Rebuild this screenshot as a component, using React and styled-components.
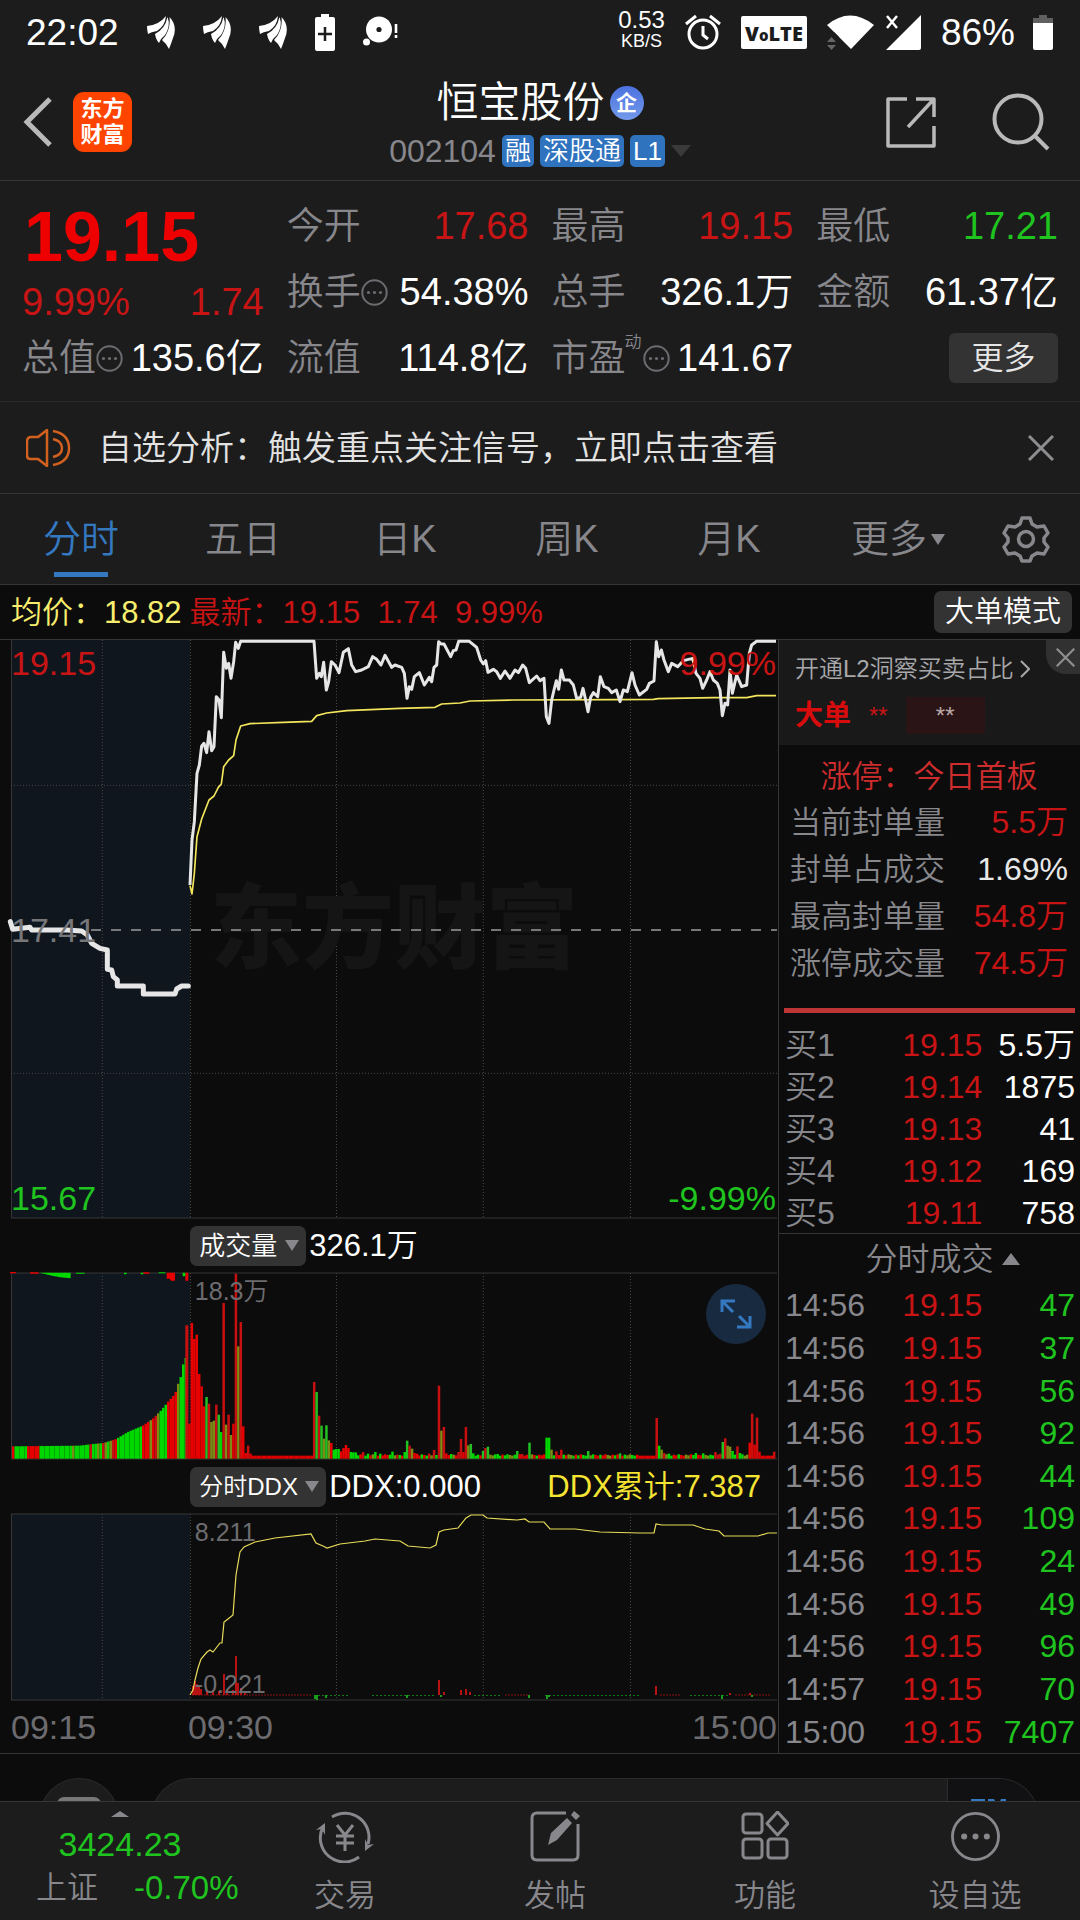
import React from 'react';
import styled, { createGlobalStyle } from 'styled-components';

const c = {
  panel: '#1c1c1d',
  chart: '#0c0c0c',
  pre: '#10161e',
  line: '#363637',
  label: '#87878c',
  dim: '#6c6c70',
  red: '#c81414',
  hotRed: '#ee0000',
  green: '#1fc41f',
  blue: '#3478c0',
  icon: '#b9b9b9',
  chip: '#333334',
};

const Global = createGlobalStyle`
  * { box-sizing: border-box; }
  body { margin: 0; background: ${c.chart}; }
  button, select, input {
    font: inherit; color: inherit; border: 0; padding: 0; margin: 0;
    background: none; appearance: none; border-radius: 0;
  }
  svg { display: block; }
`;

const Page = styled.div`
  display: flex;
  flex-direction: column;
  min-height: 100vh;
  background: ${c.chart};
  color: #fff;
  font-family: "Liberation Sans", "Noto Sans CJK SC", sans-serif;
  font-weight: 350;
  font-size: 31px;
  line-height: 1;
  white-space: nowrap;
`;

/* ---------- status bar ---------- */
const StatusBar = styled.div`
  display: flex;
  justify-content: space-between;
  align-items: center;
  height: 64px;
  padding: 0 27px 0 26px;
  background: ${c.panel};
  font-size: 37px;
`;
const StatusGroup = styled.div`
  display: flex;
  align-items: center;
  gap: ${p => p.$gap}px;
`;
const NetSpeed = styled.span`
  display: flex;
  flex-direction: column;
  align-items: center;
  padding-bottom: 6px;
  font-size: 24px;
  line-height: 24px;
  small { font-size: 18px; line-height: 18px; }
`;
const Volte = styled.span`
  display: flex;
  align-items: baseline;
  justify-content: center;
  width: 66px;
  height: 33px;
  border-radius: 2px;
  background: #fff;
  color: ${c.panel};
  font: 800 20px/35px "Open Sans", sans-serif;
  small { font-size: 15px; }
`;

/* ---------- header ---------- */
const Header = styled.header`
  display: grid;
  grid-template-columns: 1fr auto 1fr;
  align-items: center;
  height: 117px;
  padding: 0 22px;
  background: ${c.panel};
  border-bottom: 1px solid ${c.line};
`;
const HeaderSide = styled.div`
  display: flex;
  align-items: center;
  gap: ${p => p.$gap}px;
  justify-content: ${p => (p.$end ? 'flex-end' : 'flex-start')};
  padding-right: 8px;
`;
const Logo = styled.a`
  display: grid;
  place-content: center;
  width: 59px;
  height: 60px;
  border-radius: 11px;
  background: #ff4400;
  color: #fff;
  font-size: 22px;
  font-weight: 700;
  line-height: 26px;
  text-decoration: none;
`;
const TitleBlock = styled.div`
  display: flex;
  flex-direction: column;
  align-items: center;
  gap: 7px;
`;
const Title = styled.h1`
  display: flex;
  align-items: center;
  gap: 5px;
  margin: 0;
  font-size: 42px;
  font-weight: 350;
  line-height: 50px;
`;
const Seal = styled.span`
  display: grid;
  place-content: center;
  width: 34px;
  height: 34px;
  border-radius: 50%;
  background: linear-gradient(#4c72e0, #7299ea);
  font-size: 21px;
  line-height: 21px;
  font-weight: 700;
`;
const CodeRow = styled.div`
  display: flex;
  align-items: center;
  gap: 6px;
  color: ${c.label};
  font-size: 32px;
  line-height: 32px;
`;
const Tag = styled.span`
  padding: 0 3px;
  border-radius: 5px;
  background: #2f72be;
  color: #fff;
  font-size: 26px;
  line-height: 32px;
`;
const Caret = styled.i`
  width: 0;
  height: 0;
  border-left: ${p => p.$w}px solid transparent;
  border-right: ${p => p.$w}px solid transparent;
  ${p => (p.$up ? 'border-bottom' : 'border-top')}: ${p => p.$h}px solid ${p => p.$color || c.label};
`;

/* ---------- quote ---------- */
const Quote = styled.section`
  display: grid;
  grid-template-columns: repeat(4, 1fr);
  grid-template-rows: repeat(3, 66px);
  column-gap: 23px;
  padding: 12px 22px 10px;
  background: ${c.panel};
  border-bottom: 1px solid #2a2a2b;
  font-size: 38px;
`;
const Headline = styled.div`
  grid-row: span 2;
  display: flex;
  flex-direction: column;
  justify-content: space-between;
  padding: 8px 0 4px;
  color: ${c.red};
`;
const BigPrice = styled.strong`
  padding-left: 2px;
  color: ${c.hotRed};
  font-size: 70px;
  line-height: 72px;
  font-weight: 700;
`;
const Cell = styled.div`
  display: flex;
  align-items: center;
  justify-content: space-between;
  color: ${p => p.$color || '#fff'};
`;
const CellLabel = styled.span`
  display: flex;
  align-items: center;
  color: ${c.label};
  font-size: 37px;
  sup { align-self: flex-start; font-size: 17px; line-height: 17px; margin: -6px 1px 0 -1px; }
`;
const MoreButton = styled.button`
  justify-self: end;
  align-self: center;
  width: 109px;
  height: 50px;
  border-radius: 6px;
  background: ${c.chip};
  color: #e6e6e6;
  font-size: 32px;
  line-height: 48px;
`;

/* ---------- notice ---------- */
const Notice = styled.section`
  display: flex;
  align-items: center;
  height: 92px;
  padding: 0 26px;
  gap: 26px;
  background: ${c.panel};
  border-bottom: 1px solid ${c.line};
  color: #e3e3e3;
  font-size: 34px;
  p { flex: 1; margin: 0; }
`;

/* ---------- tabs ---------- */
const Tabs = styled.nav`
  display: grid;
  grid-template-columns: repeat(6, 3fr) 2fr;
  height: 91px;
  background: ${c.panel};
  border-bottom: 1px solid ${c.line};
  font-size: 38px;
`;
const Tab = styled.button`
  display: flex;
  align-items: center;
  justify-content: center;
  gap: 4px;
  padding-left: ${p => (p.$menu ? 14 : 0)}px;
  color: ${p => (p.$active ? c.blue : c.label)};
  background: ${p =>
    p.$active ? `linear-gradient(${c.blue}, ${c.blue}) center bottom 7px / 54px 5px no-repeat` : 'none'};
`;

const InfoRow = styled.div`
  display: flex;
  align-items: center;
  height: 55px;
  padding: 0 8px 0 11px;
  border-bottom: 1px solid ${c.line};
  color: ${c.red};
  white-space: pre;
`;
const Average = styled.span`
  margin-right: 8px;
  color: #f8ee6e;
`;
const ModeButton = styled.button`
  margin-left: auto;
  padding: 0 11px;
  height: 42px;
  border-radius: 7px;
  background: ${c.chip};
  color: #fff;
  font-size: 29px;
  line-height: 40px;
`;

/* ---------- body ---------- */
const Body = styled.main`
  display: grid;
  grid-template-columns: minmax(0, 778fr) minmax(0, 302fr);
  border-bottom: 1px solid ${c.line};
`;
const ChartColumn = styled.div`
  padding: 0 1px 0 11px;
`;
const Plot = styled.div`
  position: relative;
  height: ${p => p.$h}px;
  svg { width: 100%; height: 100%; overflow: visible; }
`;
const AxisLabel = styled.span`
  position: absolute;
  ${p => p.$pos};
  color: ${p => p.$color || c.dim};
  font-size: ${p => (p.$small ? 25 : 34)}px;
`;
const Watermark = styled.span`
  position: absolute;
  top: 50%;
  left: 50%;
  transform: translate(-50%, -50%);
  color: #151515;
  font-size: 92px;
  font-weight: 900;
`;
const IndicatorRow = styled.div`
  display: flex;
  align-items: center;
  gap: 3px;
  height: 55px;
  padding: 0 16px 0 23.4%;
  font-size: 31px;
`;
const Picker = styled.label`
  position: relative;
  display: flex;
  align-items: center;
  border-radius: 7px;
  background: ${c.chip};
  select {
    height: 40px;
    padding: 0 28px 0 9px;
    font-size: ${p => (p.$small ? 24 : 26)}px;
    line-height: 38px;
  }
  i { position: absolute; right: 7px; pointer-events: none; }
`;
const Cumulative = styled.span`
  margin-left: auto;
  color: #f5e532;
`;
const Expand = styled.button`
  position: absolute;
  top: 11px;
  right: 11px;
  display: grid;
  place-content: center;
  width: 60px;
  height: 60px;
  border-radius: 50%;
  background: #182a40;
  svg { width: 34px; height: 34px; }
`;
const TimeAxis = styled.div`
  display: grid;
  grid-template-columns: 23.1% 1fr auto;
  align-items: center;
  height: 52px;
  color: ${c.dim};
  font-size: 34px;
`;

/* ---------- side panel ---------- */
const Side = styled.aside`
  display: flex;
  flex-direction: column;
  border-left: 1px solid ${c.line};
`;
const Promo = styled.section`
  position: relative;
  height: 105px;
  padding: 14px 0 0 16px;
  background: #19191a;
  color: #a8a8ab;
  font-size: 24px;
`;
const PromoLink = styled.a`
  display: flex;
  align-items: center;
  gap: 6px;
  color: inherit;
  line-height: 30px;
  text-decoration: none;
`;
const PromoClose = styled.button`
  position: absolute;
  top: 0;
  right: 0;
  display: grid;
  place-content: center;
  width: 34px;
  height: 34px;
  padding-left: 4px;
  border-bottom-left-radius: 20px;
  background: #313132;
`;
const BigOrders = styled.div`
  display: flex;
  align-items: center;
  gap: 18px;
  margin-top: 13px;
  height: 37px;
  color: ${c.red};
  b { color: #d80c0c; font-size: 28px; font-weight: 700; }
  mark {
    width: 79px;
    background: #2b1415;
    color: #b8a8a8;
    text-align: center;
    line-height: 37px;
  }
`;
const Limit = styled.section`
  margin: 0 5px;
  padding: 9px 7px 21px 6px;
  border-bottom: 5px solid #bd3535;
  h2 {
    margin: 0;
    color: #cf2d2d;
    font-size: 31px;
    font-weight: 350;
    line-height: 45px;
    text-align: center;
  }
  dl { margin: 0; }
`;
const LimitRow = styled.div`
  display: flex;
  justify-content: space-between;
  line-height: 47px;
  dt { color: ${c.label}; }
  dd { margin: 0; color: ${p => p.$color || c.red}; font-size: 32px; }
`;
const Deals = styled.table`
  width: 100%;
  border-collapse: collapse;
  table-layout: fixed;
  color: ${c.label};
  font-size: 32px;
  td { padding: 0; height: ${p => p.$row}px; }
  td:first-child { padding-left: 6px; width: 36%; }
  td:nth-child(2) { color: ${c.red}; text-align: right; width: 95px; }
  td:last-child { color: ${p => p.$qty}; text-align: right; padding-right: 5px; }
`;
const BidWrap = styled.div`
  padding: 11px 0 0;
  height: 221px;
  border-bottom: 1px solid ${c.line};
`;
const DealsTitle = styled.button`
  display: flex;
  justify-content: center;
  align-items: center;
  gap: 8px;
  height: 50px;
  padding-left: 26px;
  color: ${c.label};
  font-size: 32px;
`;
const DealsWrap = styled.div`
  flex: 1;
  table { height: 100%; }
`;

/* ---------- clipped search strip ---------- */
const Strip = styled.div`
  display: flex;
  gap: 32px;
  height: 47px;
  padding: 24px 41px 0 39px;
  overflow: hidden;
`;
const RoundButton = styled.button`
  display: flex;
  justify-content: center;
  flex: none;
  width: 80px;
  height: 80px;
  padding-top: 18px;
  border: 1px solid #2c2c2d;
  border-radius: 50%;
  background: ${c.panel};
`;
const SearchPill = styled.div`
  display: flex;
  flex: 1;
  height: 80px;
  border: 1px solid #2c2c2d;
  border-radius: 40px;
  background: ${c.panel};
  overflow: hidden;
  input { flex: 1; }
  button {
    display: flex;
    justify-content: center;
    width: 91px;
    padding: 19px 24px 0 16px;
    border-left: 1px solid #2c2c2d;
    background: #111113;
  }
`;

/* ---------- bottom navigation ---------- */
const Bottom = styled.nav`
  display: grid;
  grid-template-columns: 240fr repeat(4, 210fr);
  height: 119px;
  background: ${c.panel};
  border-top: 1px solid ${c.line};
`;
const IndexButton = styled.button`
  display: flex;
  flex-direction: column;
  align-items: center;
  padding-top: 9px;
  color: ${c.green};
  font-size: 34px;
  line-height: 43px;
  i { margin-bottom: 6px; }
`;
const IndexRow = styled.span`
  display: flex;
  gap: 36px;
  padding-left: 36px;
  font-size: 33px;
  align-self: stretch;
  em { font-style: normal; font-size: 31px; color: ${c.label}; }
`;
const NavButton = styled.button`
  display: flex;
  flex-direction: column;
  align-items: center;
  justify-content: space-between;
  padding: 9px 0;
  color: ${c.label};
  line-height: 31px;
`;

/* ---------- icons ---------- */
const Leaf = () => (
  <svg width="28" height="33" viewBox="0 0 28 33" fill="#fff">
    <path d="M0 10Q12 9 19 0Q18 10 10 15Q4 16 1 18Q0 14 0 10Z" />
    <path d="M8 18Q18 13 20.500 1Q24 10 18 19Q14 22 12 27Q9 24 8 18Z" />
    <path d="M15 24Q24 15 22.500 1Q31 10 26 22Q24 28 22 33Q19 27 15 24Z" />
  </svg>
);
const BatteryPlus = () => (
  <svg width="20" height="37" viewBox="0 0 20 37">
    <path fill="#fff" d="M6 0h8v3h4q2 0 2 2v30q0 2-2 2H2q-2 0-2-2V5q0-2 2-2h4z" />
    <path stroke={c.panel} strokeWidth="2.500" d="M10 13v14M3 20h14" />
  </svg>
);
const Bubble = () => (
  <svg width="36" height="32" viewBox="0 0 36 32">
    <circle cx="16" cy="13.500" r="13" fill="#fff" />
    <circle cx="16" cy="13.500" r="2.600" fill={c.panel} />
    <circle cx="3.500" cy="26" r="3.500" fill="#fff" />
    <path stroke="#fff" strokeWidth="2.600" d="M33 8v9M33 19v3" />
  </svg>
);
const Alarm = () => (
  <svg width="36" height="36" viewBox="0 0 36 36" fill="none" stroke="#fff" strokeWidth="3">
    <circle cx="18" cy="20" r="14" />
    <path d="M18 12v9l5 4M1 10l10-8M35 10L25 2" />
  </svg>
);
const Wifi = () => (
  <svg width="47" height="35" viewBox="0 0 47 35">
    <path fill="#fff" d="M0 10Q23 -9 47 10L24 34Z" />
    <path fill={c.panel} d="M0 17h7l5 5v13H0z" />
    <path fill="#666" d="M0 27l4.500-5 4.500 5zM0 30h9l-4.500 5z" />
  </svg>
);
const Signal = () => (
  <svg width="35" height="35" viewBox="0 0 35 35">
    <path fill="#fff" d="M35 0v33q0 2-2 2H0z" />
    <path stroke="#fff" strokeWidth="2.500" d="M1 1l10 12M11 1L1 13" />
  </svg>
);
const Battery = () => (
  <svg width="20" height="35" viewBox="0 0 20 35">
    <path fill="#606060" d="M6 0h8v3h6v6H0V3h6z" />
    <path fill="#fff" d="M0 8h20v25q0 2-2 2H2q-2 0-2-2z" />
  </svg>
);
const Back = () => (
  <svg width="30" height="50" viewBox="0 0 30 50" fill="none" stroke={c.icon} strokeWidth="5">
    <path d="M28 2L5 25l23 23" />
  </svg>
);
const Share = () => (
  <svg width="50" height="51" viewBox="0 0 50 51" fill="none" stroke={c.icon} strokeWidth="3.500" strokeLinejoin="round">
    <path d="M21 2H2v47h46V29M30 2h18v18M48 2L22 30" />
  </svg>
);
const Search = () => (
  <svg width="58" height="58" viewBox="0 0 58 58" fill="none" stroke={c.icon} strokeWidth="4">
    <circle cx="26" cy="26" r="23.500" />
    <path d="M42 42l14 14" />
  </svg>
);
const Dots = ({ size = 27, sw = 2, color = c.dim }) => (
  <svg width={size} height={size} viewBox="0 0 27 27" fill={color} stroke={color}>
    <circle cx="13.500" cy="13.500" r="12.200" fill="none" strokeWidth={sw} />
    <g stroke="none">
      <circle cx="7.500" cy="13.500" r="1.600" />
      <circle cx="13.500" cy="13.500" r="1.600" />
      <circle cx="19.500" cy="13.500" r="1.600" />
    </g>
  </svg>
);
const Speaker = () => (
  <svg width="46" height="38" viewBox="0 0 46 38" fill="none" stroke="#d2611f" strokeWidth="2.500" strokeLinejoin="round">
    <path d="M21 1v36l-9-7H4q-3 0-3-4V13q0-5 4-5h7zM27 10q9 2 9 9t-9 9M27 2q16 3 16 17T27 36" />
  </svg>
);
const Cross = ({ size = 26, sw = 3, color = '#8e8e90' }) => (
  <svg width={size} height={size} viewBox="0 0 26 26" stroke={color} strokeWidth={sw}>
    <path d="M1 1l24 24M25 1L1 25" />
  </svg>
);
const Gear = () => (
  <svg width="48" height="48" viewBox="0 0 48 48" fill="none" stroke={c.label} strokeWidth="3.500" strokeLinejoin="round">
    <path d="M20 3h8l2 6 5 3 7-1 4 7-4 5v4l4 5-4 7-7-1-5 3-2 5h-8l-2-5-5-3-7 1-4-7 4-5v-4l-4-5 4-7 7 1 5-3z" />
    <circle cx="24" cy="24" r="7.500" />
  </svg>
);
const Trade = () => (
  <svg width="58" height="52" viewBox="0 0 58 52" fill="none" stroke={c.label} strokeWidth="3">
    <path d="M16 6A24 24 0 0 1 52 33M43 46A24 24 0 0 1 7 16" />
    <path fill={c.label} stroke="none" d="M0 19L9 12v12l-3-6zM58 33l-9 7V28l3 6z" />
    <path d="M21 14l8 10 8-10M29 24v16M20 25h18M20 32h18" />
  </svg>
);
const Post = () => (
  <svg width="50" height="51" viewBox="0 0 50 51" fill="none" stroke={c.label} strokeWidth="3">
    <path d="M36 2H7Q2 2 2 7v37q0 5 5 5h36q5 0 5-5V13" />
    <path fill={c.label} stroke="none" d="M18 34l3-12L37 7l5 5-15 17zM41 4l3-4 6 5-4 4z" />
  </svg>
);
const Apps = () => (
  <svg width="48" height="50" viewBox="0 0 48 50" fill="none" stroke={c.label} strokeWidth="3" strokeLinejoin="round">
    <rect x="2" y="3" width="19" height="19" rx="3" />
    <rect x="2" y="28" width="19" height="19" rx="3" />
    <rect x="27" y="28" width="19" height="19" rx="3" />
    <path d="M36.500 1L47 12.500 36.500 24 26 12.500z" />
  </svg>
);
const Arrows = () => (
  <svg viewBox="0 0 34 34" fill="none" stroke={c.blue} strokeWidth="3">
    <path d="M3 15V4h13M4 5l10 10M31 19v11H18M30 29L20 19" />
  </svg>
);

/* ---------- chart data ---------- */
// Price charts are plotted on a grid of a third of a pixel.
const price = '570,795 576,660 583,605 591,460 598,435 605,378 612,370 620,398 627,335 635,392 642,380 649,230 657,240 664,293 671,97 679,145 686,130 693,175 701,125 707,67 715,85 722,64 942,64 950,175 958,160 964,170 971,127 979,210 986,185 994,125 1005,135 1017,158 1030,97 1045,86 1055,135 1067,155 1085,150 1105,140 1118,110 1130,118 1143,135 1155,106 1175,142 1185,135 1205,142 1213,160 1221,235 1228,200 1235,208 1243,170 1258,158 1273,195 1288,172 1295,185 1302,142 1310,135 1316,65 1323,72 1332,72 1352,110 1360,92 1368,90 1376,64 1408,64 1430,82 1442,120 1450,132 1457,122 1464,157 1480,148 1490,155 1501,175 1515,153 1530,175 1545,150 1555,158 1568,135 1577,145 1588,188 1610,168 1620,182 1632,175 1639,290 1647,310 1655,240 1662,210 1669,182 1676,208 1684,150 1692,180 1708,180 1720,195 1730,235 1742,232 1749,205 1757,240 1764,275 1772,232 1780,218 1793,230 1801,170 1812,200 1825,205 1835,218 1849,210 1860,245 1870,210 1882,215 1896,158 1905,195 1918,225 1940,208 1948,190 1962,183 1969,65 1976,110 1984,90 1992,120 2005,155 2015,130 2033,140 2050,122 2078,115 2088,160 2100,175 2108,205 2120,180 2130,155 2140,180 2152,190 2160,210 2167,287 2175,250 2183,255 2190,150 2197,220 2210,165 2225,200 2240,195 2248,100 2255,75 2270,64 2328,64';
const average = '570,797 576,822 583,760 591,650 605,597 627,540 642,528 655,502 664,492 671,440 686,420 701,407 708,360 722,318 750,311 850,307 935,304 950,287 980,279 1040,272 1200,265 1305,262 1325,252 1380,249 1410,243 1540,240 1840,239 1960,238 1975,236 2140,233 2240,233 2270,227 2328,227';
const auction = '31,905 38,928 90,922 95,930 200,930 245,933 262,945 275,970 300,985 322,990 322,1048 335,1050 340,1070 352,1080 352,1098 430,1098 430,1122 525,1122 530,1107 545,1098 565,1098';
const gridX = [307, 571.5, 1009.5, 1450, 1891.5];

const R = '#e60000';
const G = '#00d800';
const M = '#7d8c14';
const tint = { R, G, M, r: '#c81010', g: '#22c022' };

// Call-auction bars: colour per bar, height from the break points.
const auctionTone = 'RGGGGGRRRRRGGGGGGGGGGGGGMGGGGGGrGGMGrMGMrRGGGGGGGGGGRRRMRrMGGGRRRRMGGG';
const auctionTop = [[36, 740], [235, 738], [275, 733], [307, 730], [345, 718], [380, 697], [425, 678], [455, 657], [480, 632], [500, 607], [522, 582], [530, 555], [538, 535], [545, 497], [553, 475]];
const lerp = (pts, x) => {
  for (let i = 1; i < pts.length; i++) {
    const [x0, y0] = pts[i - 1];
    const [x1, y1] = pts[i];
    if (x <= x1) return y0 + ((y1 - y0) * (x - x0)) / (x1 - x0);
  }
  return pts[pts.length - 1][1];
};

const barStep = 7.34;
const barAt = x => Math.round((x - 568) / barStep);
const peaks = {};
'568:672R 575:370R 583:418R 590:405R 597:523R 605:560R 612:620R 619:592g 627:612r 634:667M 641:663M 649:615r 656:645g 663:697G 671:310r 678:675M 686:645r 693:706M 701:672R 708:222r 715:440M 722:367r 730:680R 737:760R 744:738r 751:762R 942:547r 950:577g 957:648r 964:678g 971:717M 979:677g 986:722M 994:730R 1001:750G 1008:748G 1015:748G 1023:755R 1030:745R 1037:736R 1045:745R 1052:757G 1059:758G 1067:758G 1089:757r 1103:762G 1125:757G 1140:762G 1170:765G 1178:756G 1192:765r 1215:757G 1221:723g 1229:738r 1236:747M 1244:760R 1251:762R 1287:762r 1302:751r 1316:558r 1324:693M 1331:682r 1338:761R 1353:763G 1375:757r 1382:718r 1389:757R 1397:682r 1404:737M 1412:733g 1419:761G 1448:754g 1455:745r 1463:741g 1492:763G 1550:754g 1565:763r 1588:729g 1640:714G 1647:714G 1655:750M 1670:755r 1684:750r 1764:754g 1858:761g 1969:655r 1977:738G 1985:750M 1992:760r 2006:762G 2086:760G 2108:761G 2145:757r 2152:765r 2160:762r 2166:727g 2174:716r 2182:738M 2189:741M 2197:754G 2211:740r 2220:760G 2227:764G 2247:729R 2255:642r 2262:735R 2270:654r 2277:756R 2324:756r'
  .split(' ')
  .forEach(s => {
    const [x, rest] = s.split(':');
    peaks[barAt(+x)] = [+rest.slice(0, -1), rest.slice(-1)];
  });
const quietTone = 'RGGMRGRRGMGGRRGMRRGGRMGR';
const session = Array.from({ length: 240 }, (_, i) => {
  if (peaks[i]) return peaks[i];
  if (i < 51 || i > 232 || (i > 183 && i < 191)) return [768, 'R'];
  return [764 + ((i * 7) % 5), quietTone[(i * 5 + (i >> 2)) % 24]];
});

const ddx = '190,1695 193,1690 195,1680 198,1668 201,1659 207,1652 210,1650 213,1652 220,1643 222,1643 224,1622 228,1619 233,1615 236,1575 240,1552 244,1547 255,1542 275,1538 311,1534 316,1543 323,1546 327,1548 340,1544 365,1541 375,1539 400,1541 408,1546 430,1548 436,1545 439,1532 444,1530 458,1528 466,1518 471,1515 483,1515 487,1518 517,1520 525,1519 529,1522 544,1522 550,1529 575,1529 600,1532 640,1533 654,1533 656,1524 662,1525 693,1525 705,1529 719,1531 724,1536 750,1536 758,1536 768,1533 777,1533';
const ddxBars = [[193, 9], [195, 14], [197, 11], [199, 8], [201, 6], [207, 5], [213, 5], [219, 4], [224, 21], [227, 5], [233, 5], [236, 39], [238, 12], [241, 7], [245, 4], [315, -4], [317, -5], [326, -3], [407, -3], [439, 15], [441, -2], [444, 3], [461, 5], [466, 6], [470, 3], [529, -3], [547, -4], [549, -2], [656, 9], [722, -4], [730, 2], [750, 2], [752, -2]];

const Grid = ({ top, bottom, u }) => (
  <g fill="none" strokeWidth={u}>
    <rect x={11 * u} y={top} width={179 * u} height={bottom - top} fill={c.pre} />
    <path stroke={c.line} d={`M${11.5 * u} ${top}V${bottom}M${11 * u} ${bottom}H${777 * u}`} />
    {gridX.map(x => (
      <path key={x} stroke="#48484a" strokeDasharray={`${u} ${2 * u}`} d={`M${(x * u) / 3} ${top}V${bottom}`} />
    ))}
  </g>
);

const PriceChart = () => (
  <svg viewBox="33 60 2298 1734" preserveAspectRatio="none" aria-hidden="true">
    <Grid top={60} bottom={1794} u={3} />
    <path stroke="#48484a" strokeWidth="3" strokeDasharray="3 6" d="M33 496H2331M33 1360H2331" />
  </svg>
);
const LineLayer = styled.div`
  position: absolute;
  inset: 0;
`;
const PriceLines = () => (
  <LineLayer>
    <svg viewBox="33 60 2298 1734" preserveAspectRatio="none" aria-hidden="true">
      <path stroke="#9a9a9c" strokeWidth="5" strokeDasharray="30 30" d="M273 930H2331" />
      <g fill="none" strokeLinejoin="round">
        <polyline points={average} stroke="#f3e65c" strokeWidth="5" />
        <polyline points={price} stroke="#e6e6e6" strokeWidth="9" />
        <polyline points={auction} stroke="#e6e6e6" strokeWidth="15" strokeLinecap="round" />
      </g>
    </svg>
  </LineLayer>
);

const VolumeChart = () => (
  <svg viewBox="33 220 2298 558" preserveAspectRatio="none" aria-hidden="true">
    <Grid top={220} bottom={778} u={3} />
    <path stroke={c.line} strokeWidth="3" d="M33 220H2331" />
    {[...auctionTone].map((t, i) => {
      const x = 36 + i * 7.5;
      const y = lerp(auctionTop, x);
      return <rect key={i} x={x} y={y} width="7.500" height={777 - y} fill={tint[t]} />;
    })}
    <rect x="556" y="377" width="9" height="400" fill={tint.r} />
    {session.map(([y, t], i) => (
      <rect key={i} x={564.5 + i * barStep} y={y} width="7.500" height={777 - y} fill={tint[t]} />
    ))}
    <path fill={G} d="M118 219H212V236L180 233 150 227z" />
    <path fill={R} d="M30 217h18v4H30zM90 218h26v4H90zM500 219h25v24h-12l-4-6h-9zM556 219h9v24h-9zM430 218h18v4h-18z" />
    <path fill={G} d="M548 219h8v11h-8zM228 219h26v3h-26zM372 219h8v5h-8zM422 219h8v5h-8zM476 218h20v3h-20z" />
  </svg>
);

const DdxChart = () => (
  <svg viewBox="11 1514 766 187" preserveAspectRatio="none" aria-hidden="true">
    <Grid top={1514} bottom={1700} u={1} />
    <path stroke={c.line} d="M11 1514H777" />
    <path stroke="#8a1010" strokeDasharray="2 1" d="M192 1695H312M505 1695H530M660 1695H680M735 1695H770" />
    <path stroke="#127a12" strokeDasharray="2 2" d="M314 1695.500H350M372 1695.500H436M474 1695.500H500M545 1695.500H640M690 1695.500H730" />
    {ddxBars.map(([x, h]) => (
      <rect key={x} x={x - 1} width="2" y={h > 0 ? 1695 - h : 1695} height={Math.abs(h)} fill={h > 0 ? '#b81212' : '#1c9c1c'} />
    ))}
    <polyline points={ddx} fill="none" stroke="#e8dc5a" strokeWidth="1.200" />
  </svg>
);

const bids = [['买1', '19.15', '5.5万'], ['买2', '19.14', '1875'], ['买3', '19.13', '41'], ['买4', '19.12', '169'], ['买5', '19.11', '758']];
const ticks = [['14:56', 47], ['14:56', 37], ['14:56', 56], ['14:56', 92], ['14:56', 44], ['14:56', 109], ['14:56', 24], ['14:56', 49], ['14:56', 96], ['14:57', 70], ['15:00', 7407]];

const DealTable = ({ rows, row, qty, label }) => (
  <Deals $row={row} $qty={qty} aria-label={label}>
    <tbody>
      {rows.map((r, i) => (
        <tr key={i}>{r.map((v, j) => <td key={j}>{v}</td>)}</tr>
      ))}
    </tbody>
  </Deals>
);

const Stat = ({ label, value, color, dots, sup }) => (
  <Cell $color={color}>
    <CellLabel>
      {label}
      {sup && <sup>{sup}</sup>}
      {dots && <Dots />}
    </CellLabel>
    <span>{value}</span>
  </Cell>
);

export default function App() {
  return (
    <Page>
      <Global />
      <StatusBar>
        <StatusGroup $gap={28}>
          <span>22:02</span>
          <Leaf /><Leaf /><Leaf />
          <BatteryPlus />
          <Bubble />
        </StatusGroup>
        <StatusGroup $gap={20}>
          <NetSpeed>0.53<small>KB/S</small></NetSpeed>
          <Alarm />
          <Volte>V<small>o</small>LTE</Volte>
          <StatusGroup $gap={12}>
            <Wifi />
            <Signal />
          </StatusGroup>
          <StatusGroup $gap={18}>
            <span>86%</span>
            <Battery />
          </StatusGroup>
        </StatusGroup>
      </StatusBar>

      <Header>
        <HeaderSide $gap={21}>
          <button aria-label="返回"><Back /></button>
          <Logo href="#"><span>东方</span><span>财富</span></Logo>
        </HeaderSide>
        <TitleBlock>
          <Title>恒宝股份<Seal>企</Seal></Title>
          <CodeRow>
            <span>002104</span>
            <Tag>融</Tag>
            <Tag>深股通</Tag>
            <Tag>L1</Tag>
            <Caret $w={10} $h={12} $color="#3a3a3b" />
          </CodeRow>
        </TitleBlock>
        <HeaderSide $gap={56} $end>
          <button aria-label="分享"><Share /></button>
          <button aria-label="搜索"><Search /></button>
        </HeaderSide>
      </Header>

      <Quote>
        <Headline>
          <BigPrice>19.15</BigPrice>
          <Cell $color={c.red}><span>9.99%</span><span>1.74</span></Cell>
        </Headline>
        <Stat label="今开" value="17.68" color={c.red} />
        <Stat label="最高" value="19.15" color={c.red} />
        <Stat label="最低" value="17.21" color={c.green} />
        <Stat label="换手" value="54.38%" dots />
        <Stat label="总手" value="326.1万" />
        <Stat label="金额" value="61.37亿" />
        <Stat label="总值" value="135.6亿" dots />
        <Stat label="流值" value="114.8亿" />
        <Stat label="市盈" value="141.67" sup="动" dots />
        <MoreButton>更多</MoreButton>
      </Quote>

      <Notice>
        <Speaker />
        <p>自选分析：触发重点关注信号，立即点击查看</p>
        <button aria-label="关闭"><Cross /></button>
      </Notice>

      <Tabs>
        <Tab $active>分时</Tab>
        <Tab>五日</Tab>
        <Tab>日K</Tab>
        <Tab>周K</Tab>
        <Tab>月K</Tab>
        <Tab $menu>更多<Caret $w={7} $h={11} /></Tab>
        <Tab aria-label="设置"><Gear /></Tab>
      </Tabs>

      <InfoRow>
        <Average>均价：18.82</Average>
        <span>最新：19.15  1.74  9.99%</span>
        <ModeButton>大单模式</ModeButton>
      </InfoRow>

      <Body>
        <ChartColumn>
          <Plot $h={578}>
            <PriceChart />
            <Watermark>东方财富</Watermark>
            <PriceLines />
            <AxisLabel $pos="top: 6px; left: 0" $color={c.red}>19.15</AxisLabel>
            <AxisLabel $pos="top: 6px; right: 1px" $color={c.red}>9.99%</AxisLabel>
            <AxisLabel $pos="top: 273px; left: 0" $color="#77777a">17.41</AxisLabel>
            <AxisLabel $pos="bottom: 3px; left: 0" $color={c.green}>15.67</AxisLabel>
            <AxisLabel $pos="bottom: 3px; right: 1px" $color={c.green}>-9.99%</AxisLabel>
          </Plot>
          <IndicatorRow>
            <Picker>
              <select aria-label="指标"><option>成交量</option></select>
              <Caret $w={7} $h={11} />
            </Picker>
            <span>326.1万</span>
          </IndicatorRow>
          <Plot $h={186}>
            <VolumeChart />
            <AxisLabel $small $pos="top: 6px; left: 24%">18.3万</AxisLabel>
            <Expand aria-label="全屏"><Arrows /></Expand>
          </Plot>
          <IndicatorRow>
            <Picker $small>
              <select aria-label="副图指标"><option>分时DDX</option></select>
              <Caret $w={7} $h={11} />
            </Picker>
            <span>DDX:0.000</span>
            <Cumulative>DDX累计:7.387</Cumulative>
          </IndicatorRow>
          <Plot $h={187}>
            <DdxChart />
            <AxisLabel $small $pos="top: 6px; left: 24%">8.211</AxisLabel>
            <AxisLabel $small $pos="bottom: 4px; left: 24%">-0.221</AxisLabel>
          </Plot>
          <TimeAxis><span>09:15</span><span>09:30</span><span>15:00</span></TimeAxis>
        </ChartColumn>

        <Side>
          <Promo>
            <PromoLink href="#">
              开通L2洞察买卖占比
              <svg width="10" height="18" viewBox="0 0 10 18" fill="none" stroke="#a8a8ab" strokeWidth="2"><path d="M1 1l8 8-8 8" /></svg>
            </PromoLink>
            <BigOrders><b>大单</b><span>**</span><mark>**</mark></BigOrders>
            <PromoClose aria-label="关闭"><Cross size={19} /></PromoClose>
          </Promo>
          <Limit>
            <h2>涨停：今日首板</h2>
            <dl>
              <LimitRow><dt>当前封单量</dt><dd>5.5万</dd></LimitRow>
              <LimitRow $color="#e8e8e8"><dt>封单占成交</dt><dd>1.69%</dd></LimitRow>
              <LimitRow><dt>最高封单量</dt><dd>54.8万</dd></LimitRow>
              <LimitRow><dt>涨停成交量</dt><dd>74.5万</dd></LimitRow>
            </dl>
          </Limit>
          <BidWrap><DealTable label="买盘" rows={bids} row={42} qty="#fff" /></BidWrap>
          <DealsTitle>分时成交<Caret $up $w={9} $h={12} /></DealsTitle>
          <DealsWrap>
            <DealTable label="分时成交" rows={ticks.map(([t, n]) => [t, '19.15', n])} row={42} qty={c.green} />
          </DealsWrap>
        </Side>
      </Body>

      <Strip>
        <RoundButton aria-label="消息">
          <svg width="44" height="36" viewBox="0 0 44 36" fill="none" stroke="#77777a" strokeWidth="4"><rect x="2" y="2" width="40" height="32" rx="5" /></svg>
        </RoundButton>
        <SearchPill>
          <input aria-label="搜索" />
          <button aria-label="助手">
            <svg width="36" height="20" viewBox="0 0 36 20" fill={c.blue}><path d="M0 1h14v4H5v4h8v4H5v7H0zM17 1h6l4 7 3-7h5v19h-4V9l-4 7-5-7v11h-5z" /></svg>
          </button>
        </SearchPill>
      </Strip>

      <Bottom>
        <IndexButton>
          <Caret $up $w={9} $h={6} />
          <span>3424.23</span>
          <IndexRow><em>上证</em><span>-0.70%</span></IndexRow>
        </IndexButton>
        <NavButton><Trade />交易</NavButton>
        <NavButton><Post />发帖</NavButton>
        <NavButton><Apps />功能</NavButton>
        <NavButton><Dots size={51} sw={1.5} color={c.label} />设自选</NavButton>
      </Bottom>
    </Page>
  );
}
